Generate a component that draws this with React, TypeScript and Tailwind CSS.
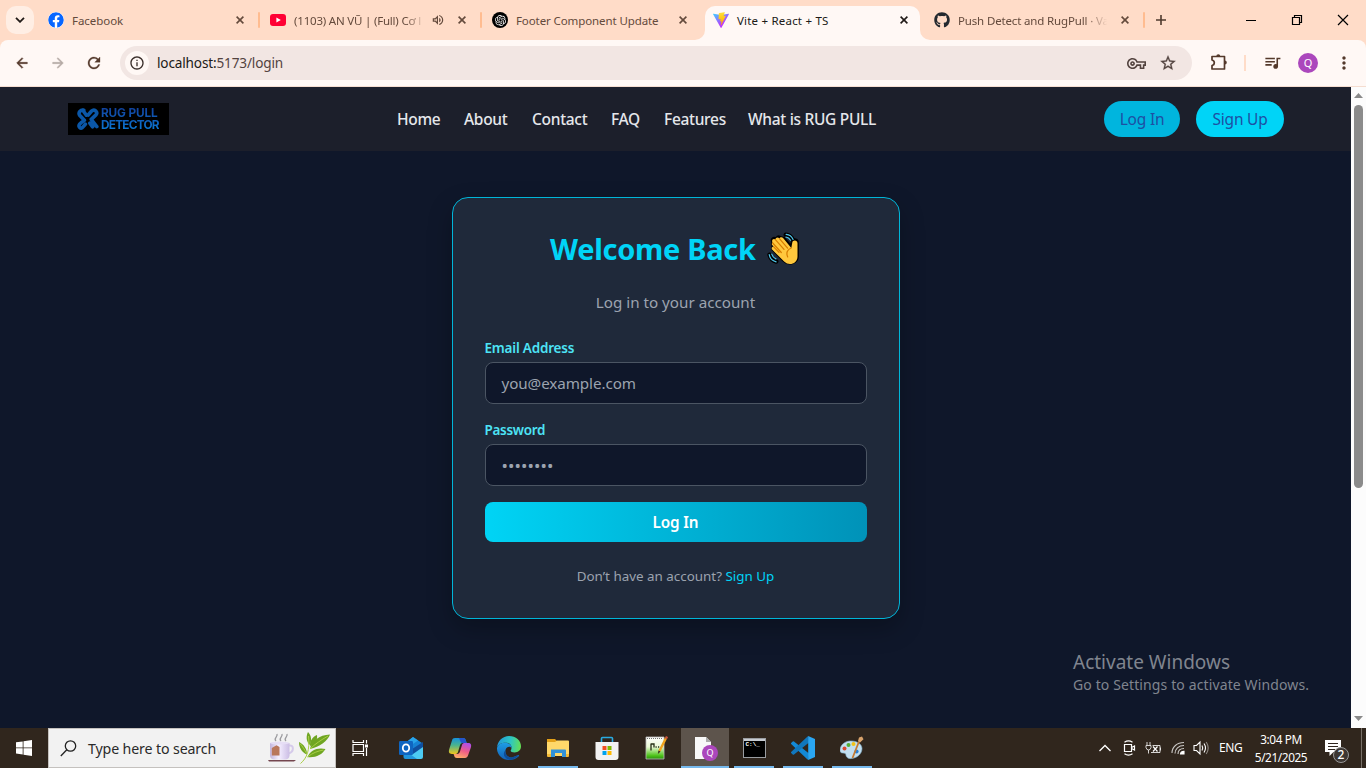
import type { ReactNode } from "react";
import { FaFacebook, FaGithub } from "react-icons/fa";
import { SiOpenai } from "react-icons/si";
import {
  MdArrowBack,
  MdArrowForward,
  MdRefresh,
  MdStarBorder,
  MdOutlineVpnKey,
  MdQueueMusic,
  MdMoreVert,
  MdOutlineVolumeUp,
  MdInfoOutline,
} from "react-icons/md";

function CloseGlyph({ className }: { className: string }) {
  return (
    <svg viewBox="0 0 8 8" className={`size-[8px] shrink-0 ${className}`} fill="none" stroke="currentColor" strokeWidth="1.6">
      <path d="M.6.6l6.8 6.8M7.4.6L.6 7.4" />
    </svg>
  );
}

function YoutubeIcon() {
  return (
    <svg viewBox="0 0 16 16" className="size-4 shrink-0">
      <rect x="0" y="2" width="16" height="12" rx="3" fill="#ff0033" />
      <path d="M6.4 5.4v5.2L10.8 8z" fill="#fff" />
    </svg>
  );
}

function ViteIcon() {
  return (
    <svg viewBox="0 0 256 257" className="size-4 shrink-0">
      <defs>
        <linearGradient id="viteA" x1="0" x2="57.6%" y1="0" y2="78.4%">
          <stop offset="0" stopColor="#41D1FF" />
          <stop offset="1" stopColor="#BD34FE" />
        </linearGradient>
        <linearGradient id="viteB" x1="43.4%" x2="50.3%" y1="2.2%" y2="89%">
          <stop offset="0" stopColor="#FFEA83" />
          <stop offset=".08" stopColor="#FFDD35" />
          <stop offset="1" stopColor="#FFA800" />
        </linearGradient>
      </defs>
      <path fill="url(#viteA)" d="M255.2 37.9 134.9 252.9c-2.5 4.5-8.9 4.5-11.4 0L.9 37.9c-2.7-4.8 1.4-10.6 6.8-9.6l120.4 21.5c.8.1 1.6.1 2.3 0l117.9-21.5c5.4-1 9.5 4.8 6.9 9.6Z" />
      <path fill="url(#viteB)" d="M185.4.1 96.4 17.5a3.3 3.3 0 0 0-2.6 3l-5.5 92.5a3.3 3.3 0 0 0 4 3.4l24.8-5.7c2.3-.5 4.4 1.5 3.9 3.9l-7.4 36.1c-.5 2.4 1.8 4.5 4.1 3.8l15.3-4.7c2.4-.7 4.6 1.4 4.1 3.8l-11.7 56.6c-.7 3.5 4 5.5 5.9 2.5l1.3-2 72.5-144.7c1.2-2.4-.9-5.2-3.5-4.7l-25.5 4.9c-2.4.5-4.4-1.8-3.8-4.1L189 4.1c.7-2.3-1.3-4.6-3.7-4Z" />
    </svg>
  );
}

function Divider() {
  return <span className="h-4 w-[2px] shrink-0 rounded-full bg-[#ffbc90]" />;
}

function Tab({ icon, title, className, tracking, fade, sound }: { icon: ReactNode; title: string; className: string; tracking: string; fade?: boolean; sound?: boolean }) {
  return (
    <div className={`flex h-[28px] shrink-0 items-center ${className}`}>
      {icon}
      <span
        className={`ml-2 min-w-0 flex-1 whitespace-nowrap pt-[2px] text-[11.5px] leading-5 ${tracking} ${
          fade ? "[mask-image:linear-gradient(to_right,black_84%,transparent_99%)]" : ""
        }`}
      >
        {title}
      </span>
      {sound && <MdOutlineVolumeUp className="ml-[4px] mr-px size-[14px] shrink-0" />}
      <CloseGlyph className="ml-3" />
    </div>
  );
}

function TabStrip() {
  return (
    <div className="flex h-10 items-center bg-[#ffdcc8] text-[#644a3c]">
      <div className="ml-[6px] mr-[4px] flex size-7 shrink-0 items-center justify-center rounded-[10px] bg-[#ffeee4] text-[#201a17]">
        <svg viewBox="0 0 10 6" className="h-[6px] w-[10px]" fill="none" stroke="currentColor" strokeWidth="1.8">
          <path d="M1 .8l4 4 4-4" />
        </svg>
      </div>
      <Tab className="w-[220px] pl-[10px] pr-[14px]" tracking="tracking-[-0.05px]" title="Facebook" icon={<FaFacebook className="size-4 shrink-0 rounded-full bg-white text-[#0866ff]" />} />
      <Divider />
      <Tab className="w-[220px] pl-[10px] pr-[14px]" tracking="tracking-[-0.2px]" title="(1103) AN VŨ | (Full) Cơ l" fade sound icon={<YoutubeIcon />} />
      <Divider />
      <Tab
        className="w-[223px] pl-[10px] pr-[18px]"
        tracking="tracking-[-0.1px]"
        title="Footer Component Update"
        icon={
          <span className="flex size-4 shrink-0 items-center justify-center rounded-full bg-black text-white">
            <SiOpenai className="size-[11px]" />
          </span>
        }
      />
      <div className="relative flex h-10 w-[215px] shrink-0 items-end">
        <svg viewBox="0 0 10 10" className="absolute -left-[10px] bottom-0 size-[10px]"><path d="M10 0v10H0A10 10 0 0 0 10 0z" fill="#fff8f5" /></svg>
        <svg viewBox="0 0 10 10" className="absolute -right-[10px] bottom-0 size-[10px]"><path d="M0 0v10h10A10 10 0 0 1 0 0z" fill="#fff8f5" /></svg>
        <div className="h-[34px] w-full rounded-t-[10px] bg-[#fff8f5] text-[#201a17]">
          <Tab className="w-full pl-2 pr-3" tracking="tracking-[0.2px]" title="Vite + React + TS" icon={<ViteIcon />} />
        </div>
      </div>
      <Tab className="w-[223px] pl-[14px] pr-[14px]" tracking="tracking-[-0.15px]" title="Push Detect and RugPull · Va" fade icon={<FaGithub className="size-4 shrink-0 text-[#24292f]" />} />
      <Divider />
      <svg viewBox="0 0 10 10" className="ml-[11px] size-[10px]" fill="none" stroke="#4f3a2e" strokeWidth="1.6"><path d="M5 0v10M0 5h10" /></svg>
      <div className="ml-auto flex items-center text-black">
        <svg viewBox="0 0 46 40" className="h-10 w-[46px]"><path d="M18 20.5h10" stroke="currentColor" /></svg>
        <svg viewBox="0 0 46 40" className="h-10 w-[46px]" fill="none" stroke="currentColor" strokeWidth="1.2">
          <path d="M18.500 17.500h7v7h-7zM20.500 17.500v-2h7v7h-2" />
        </svg>
        <svg viewBox="0 0 46 40" className="h-10 w-[46px]" fill="none" stroke="currentColor" strokeWidth="1.2"><path d="M18 15l10 10M28 15L18 25" /></svg>
      </div>
    </div>
  );
}

function PuzzleIcon() {
  return (
    <svg viewBox="0 0 18 18" className="ml-[18px] mr-[-1px] size-[18px] shrink-0 -translate-y-px" fill="none" stroke="currentColor" strokeWidth="1.700" strokeLinejoin="round">
      <path d="M2 3.500h12.500v12.500H2v-3.500c1.700-.3 2.300-1.300 2.300-2.700S3.700 7.300 2 7z" />
      <path d="M6.300 3.200a2 2 0 0 1 4 0zM14.800 7.500a2 2 0 0 1 0 4z" fill="currentColor" stroke="none" />
    </svg>
  );
}

function Toolbar() {
  return (
    <div className="bg-[#ffdcc8]">
      <div className="flex h-[47px] items-center rounded-t-[8px] border-b border-[#f5ddd0] bg-[#fff8f5] text-[#54392b]">
        <MdArrowBack className="ml-[14px] size-4 shrink-0 [&>path+path]:[stroke-width:0.7]" />
        <MdArrowForward className="ml-[20px] size-4 shrink-0 text-[#b5aaa5] [&>path+path]:[stroke-width:0.7]" />
        <MdRefresh className="ml-[19px] size-[18px] shrink-0 [&>path+path]:[stroke-width:0.4]" />
        <div className="ml-[17px] flex h-[34px] w-[1072px] shrink-0 items-center rounded-full bg-[#f2e6e3] pl-[5px] text-[#53433f]">
          <span className="flex size-6 items-center justify-center rounded-full bg-[#fff8f5] text-[#3a2e2a]">
            <MdInfoOutline className="size-4" />
          </span>
          <span className="ml-2 whitespace-nowrap text-[13.6px] tracking-[-0.16px]">
            <span className="text-[#201a17]">localhost:</span>5173/login
          </span>
          <MdOutlineVpnKey className="ml-auto size-[19px]" />
          <MdStarBorder className="ml-[13px] mr-[15px] size-[18px] [&>path+path]:[stroke-width:0.4]" />
        </div>
        <PuzzleIcon />
        <span className="ml-[17px] h-4 w-[2px] bg-[#ffdcc8]" />
        <MdQueueMusic className="ml-[17px] size-[19px] shrink-0 -translate-y-px" />
        <span className="ml-[16px] flex size-5 shrink-0 items-center justify-center rounded-full bg-[#ab47bc] text-[11px] text-white">Q</span>
        <MdMoreVert className="ml-[16px] size-5 shrink-0" />
      </div>
    </div>
  );
}

function BrandLogo() {
  return (
    <div className="ml-[68px] flex h-8 w-[101px] shrink-0 items-center bg-black pl-[9px]">
      <svg viewBox="0 0 22 22" className="size-[22px] shrink-0" fill="none" stroke="#0b57a8" strokeWidth="3.600" strokeLinecap="round" strokeLinejoin="round">
        <path d="M6.800 2.200C3.500 1.500 1 4.600 2.600 7.200L7.400 12.200C3 15.200.8 17.400 2.600 19.400 4.800 21.400 6.400 18.600 8.400 16.200" />
        <path d="M6 2.500L9.400 7.200M11.200 7L14.600 3C17.400.4 21 4 19.200 6.600L14.200 11.400 19.800 18.600M12.800 15.200l2.800 3.600" />
      </svg>
      <span className="ml-[2px] bg-gradient-to-b from-[#113f9b] to-[#0a7bd8] bg-clip-text font-['Inter',sans-serif] text-[11.800px] font-bold leading-[12px] text-transparent">
        <span className="block whitespace-nowrap tracking-[-0.15px]">RUG PULL</span>
        <span className="block whitespace-nowrap tracking-[-0.75px]">DETECTOR</span>
      </span>
    </div>
  );
}

function SiteHeader() {
  return (
    <header className="flex h-16 shrink-0 items-center bg-[#1c1f2b]">
      <BrandLogo />
      <nav className="ml-[228px] flex items-center gap-6 whitespace-nowrap pt-px text-[15.500px] font-medium tracking-[-0.3px] text-[#e5e7eb]">
        <a className="w-[43px]">Home</a>
        <a className="w-[44px]">About</a>
        <a className="w-[55px]">Contact</a>
        <a className="w-[29px]">FAQ</a>
        <a className="w-[60px]">Features</a>
        <a className="w-[129px]">What is RUG PULL</a>
      </nav>
      <div className="ml-auto mr-[67px] flex gap-4 text-[15.500px] tracking-[-0.2px] text-[#1e4fa3]">
        <button className="flex h-9 w-[76px] items-center justify-center rounded-full bg-[#00b5de] pt-px">Log In</button>
        <button className="flex h-9 w-[88px] items-center justify-center rounded-full bg-[#00d4f7] pt-px">Sign Up</button>
      </div>
    </header>
  );
}

function WavingHand() {
  return (
    <svg viewBox="0 0 34 36" className="mt-[2px] h-[36px] w-[34px] shrink-0" strokeLinecap="round" strokeLinejoin="round">
      <g fill="#000" stroke="#000" strokeWidth="3.600">
        <path d="M6 9.500c-1.600-1.800.8-3.800 2.500-2.300l1.500-.8c1.100-1.900 3.400-1.400 4.200.2 1.800-.8 2.900.2 3.600 1.200l6.400 7.600 1.600-6.200c1.400-1.900 4.300-1.200 4.300 1.300v13.800c0 5.600-7.800 9-13.200 3.800L6.400 17.600z" />
        <path d="M18.800 2.800c3 .2 5.600 2.200 7 5.200M2.600 22.800c.8 3.400 3.400 5.800 6.600 6.600" fill="none" strokeWidth="4.600" />
      </g>
      <path fill="#ffc83d" d="M5.600 10.400c-1.600-2.200.9-4.400 2.800-2.800.1-2.200 2.600-2.900 4-1.200.7-1.600 2.900-1.500 3.900-.2l8 9.900.9-5.200c.2-3.400 5.300-3.200 5.300.3v13.200c0 6.800-8 10.400-13.400 5.200L5.300 17.700c-1.600-1.800.4-3.600 1.600-2.600l-1.500-1.800c-1-1.200-.5-2.400.2-2.900z" />
      <path fill="none" stroke="#d67d00" strokeWidth="1.200" d="M8.400 7.600l8.600 9.800M12.400 6.600l8.200 9.600M5.700 11l8.600 9.500M6.900 15.100l5.100 5.200M24.200 16c-4 1.600-5.300 5-3.500 8.900" />
      <g fill="none" stroke="#50c8ee" strokeWidth="1.200">
        <path d="M19.200 2.400c3 .2 5.600 2.100 6.900 5M18.900 5c2.100.2 3.600 1.400 4.700 3.300M2.200 22.700c.7 3.500 3.300 6.300 6.900 7.200M4.800 22.200c.6 2.300 2.100 3.800 4.100 4.700" />
      </g>
    </svg>
  );
}

function LoginCard() {
  return (
    <section className="mt-[46px] flex h-[422px] w-[448px] flex-col self-center rounded-[16px] border border-[#00b5d8] bg-[#1f293a] px-8 shadow-[0_10px_25px_rgba(0,0,0,0.25)]">
      <h1 className="mt-[33px] flex h-9 items-center justify-center whitespace-nowrap text-[29px] font-bold tracking-[-0.3px] text-[#00d4f7]">
        <span className="w-[207px]">Welcome Back</span>
        <span className="ml-[10px]"><WavingHand /></span>
      </h1>
      <p className="mt-[23px] text-center text-[15.200px] leading-6 text-[#9ca3af]">Log in to your account</p>
      <label className="mt-[24px] text-[13.500px] font-semibold leading-5 tracking-[-0.2px] text-[#4de3f5]">Email Address</label>
      <div className="mt-[4px] flex h-[42px] shrink-0 items-center rounded-lg border border-[#4b5563] bg-[#0f172a] px-4 pt-px text-[15.200px] tracking-[-0.08px] text-[#9ca3af]">you@example.com</div>
      <label className="mt-[16px] text-[13.500px] font-semibold leading-5 tracking-[-0.3px] text-[#4de3f5]">Password</label>
      <div className="mt-[4px] flex h-[42px] shrink-0 items-center rounded-lg border border-[#4b5563] bg-[#0f172a] px-4 pt-[2px] text-[17px] tracking-[0.1px] text-[#9ca3af]">••••••••</div>
      <button className="mt-4 flex h-10 shrink-0 items-center justify-center rounded-lg bg-[linear-gradient(to_right,#00d4f5,#0092b8)] pt-px text-[15.300px] font-semibold tracking-[-0.15px] text-white">Log In</button>
      <p className="mt-6 text-center text-[13.400px] leading-5 text-[#9ca3af]">
        Don’t have an account? <a className="text-[#00d4f7]">Sign Up</a>
      </p>
    </section>
  );
}

function Scrollbar() {
  return (
    <div className="flex w-[15px] shrink-0 flex-col items-center bg-[#fcfcfc]">
      <svg viewBox="0 0 9 5" className="mt-[6px] h-[5px] w-[9px] shrink-0"><path d="M4.500 0L9 5H0z" fill="#8a8a8a" /></svg>
      <span className="mt-[7px] h-[383px] w-[9px] rounded-full bg-[#8b8b8b]" />
      <svg viewBox="0 0 9 5" className="mb-[7px] mt-auto h-[5px] w-[9px]"><path d="M0 0h9L4.500 5z" fill="#8a8a8a" /></svg>
    </div>
  );
}

function OutlookIcon() {
  return (
    <svg viewBox="0 0 24 24" className="size-6">
      <path d="M5 8l9-7 9 6v12H5z" fill="#1682d4" />
      <path d="M5 8l9-7 5 3.400L8 12z" fill="#28a4ea" />
      <path d="M24 8v13a2 2 0 0 1-2 2H7L24 8z" fill="#4ccbf3" />
      <path d="M4.500 13.500L18 23H6.500a2 2 0 0 1-2-2z" fill="#2196dc" />
      <path d="M10 15l14-9v5l-10 7z" fill="#0f4f9f" />
      <rect x="0" y="5" width="14" height="14" rx="1.200" fill="#0f65c0" />
      <ellipse cx="7" cy="12" rx="3.200" ry="3.600" fill="none" stroke="#fff" strokeWidth="1.800" />
    </svg>
  );
}

function CopilotIcon() {
  return (
    <svg viewBox="0 0 24 24" className="size-6">
      <defs>
        <linearGradient id="copA" x1="0" y1="0" x2="0" y2="1"><stop offset="0" stopColor="#1591dc" /><stop offset=".45" stopColor="#4ab48e" /><stop offset="1" stopColor="#f0c61c" /></linearGradient>
        <linearGradient id="copB" x1="0.7" y1="0" x2="0.3" y2="1"><stop offset="0" stopColor="#b04ee8" /><stop offset=".5" stopColor="#ef5c87" /><stop offset="1" stopColor="#ffae67" /></linearGradient>
      </defs>
      <path d="M7 2h8c2 0 2.500 1 3 3l.7 2h-4c-1.800 0-2.300 1-2.800 2.600L10 16c-.6 1.500-1.400 2-3 2H4c-3 0-3.600-2-2.800-4.700L4 4.400C4.500 2.800 5.300 2 7 2z" fill="url(#copA)" />
      <path d="M11 2h4c2 0 2.500 1 3 3l.7 2h-4c-1.400 0-2-.6-2.400-2z" fill="#2455cc" />
      <path d="M17 22H9c-2 0-2.600-1-3-3l-.5-1H9c1.800 0 2.500-.8 3-2.400L14 9c.5-1.500 1.300-2 3-2h3c3 0 3.700 2 2.800 4.700L20 19.600c-.5 1.600-1.400 2.400-3 2.400z" fill="url(#copB)" />
    </svg>
  );
}

function EdgeIcon() {
  return (
    <svg viewBox="0 0 24 24" className="size-6">
      <defs>
        <linearGradient id="edgeA" x1="0" y1=".4" x2="1" y2=".5"><stop offset="0" stopColor="#2196d8" /><stop offset=".55" stopColor="#2dc6c4" /><stop offset="1" stopColor="#64df55" /></linearGradient>
        <linearGradient id="edgeB" x1="0" y1="0" x2="0" y2="1"><stop offset="0" stopColor="#1e9de4" /><stop offset="1" stopColor="#1360b5" /></linearGradient>
      </defs>
      <path d="M0 11.500C.6 5 5.600 0 12 0c7 0 12 4.800 12 10.300 0 4-3 6.200-6.300 6.200-3 0-4.400-1.200-4-2 1.800-2.500 1-7.700-5-7.700C4.400 6.800 1 8.700 0 11.500z" fill="url(#edgeA)" />
      <path d="M0 12C.8 8.600 4.500 6.800 8 6.800c4 0 7 2.400 6.600 5.700C14 10 9.500 10 8.500 14c-1 4.500 3 9 8.500 6.800 2-.8 3.800-2 4.800-1.800.5.300.3.800-.3 1.500C19.200 23 15.500 24 12 24 5.400 24-.3 18.700 0 12z" fill="url(#edgeB)" />
      <path d="M8.500 14c-1 4.500 3 9 8.500 6.800 2-.8 3.800-2 4.800-1.800-2.200 3.400-5.800 4.700-9.300 4.700-5-1-7.500-5.500-4-9.700z" fill="#0e4c97" />
    </svg>
  );
}

function FolderIcon() {
  return (
    <svg viewBox="0 0 24 24" className="size-6">
      <path d="M1 3h8l2 2v3H1z" fill="#e3a018" />
      <path d="M1 6h8l2-1.500h11a1 1 0 0 1 1 1V20H2a1 1 0 0 1-1-1z" fill="#ffd86a" />
      <path d="M5 13.500h14a1 1 0 0 1 1 1V21h-4v-4H9v4H5z" fill="#3292d8" />
      <path d="M1 18h4v3H2a1 1 0 0 1-1-1zM20 18h3v2a1 1 0 0 1-1 1h-2z" fill="#f4b934" />
    </svg>
  );
}

function StoreIcon() {
  return (
    <svg viewBox="0 0 24 24" className="size-6">
      <path d="M6.500 7V2.500a1 1 0 0 1 1-1h9a1 1 0 0 1 1 1V7" fill="none" stroke="#29abe2" strokeWidth="1.600" />
      <path d="M.5 6h23v15a3 3 0 0 1-3 3h-17a3 3 0 0 1-3-3z" fill="#f2f2f2" />
      <path d="M7.500 10h4v4h-4z" fill="#f25022" /><path d="M12.500 10h4v4h-4z" fill="#7fba00" />
      <path d="M7.500 15h4v4h-4z" fill="#00a4ef" /><path d="M12.500 15h4v4h-4z" fill="#ffb900" />
    </svg>
  );
}

function NotepadIcon() {
  return (
    <svg viewBox="0 0 24 24" className="size-6">
      <defs><linearGradient id="npp" x1="0" y1="0" x2="0" y2="1"><stop offset="0" stopColor="#fff" /><stop offset=".45" stopColor="#eaf9d6" /><stop offset=".85" stopColor="#4cc318" /><stop offset="1" stopColor="#2c8d10" /></linearGradient></defs>
      <path d="M2 1h18v22H2z" fill="url(#npp)" stroke="#bbb" strokeWidth=".8" />
      <path d="M3 2.500h16" stroke="#777" strokeWidth="1.200" strokeDasharray="1 1" />
      <path d="M7 7.500v7M7 8h3v3.500M11.500 11h1.200M14 11h1.200" stroke="#263016" strokeWidth="1.300" fill="none" />
      <path d="M22 2L15.500 15" stroke="#f0a31c" strokeWidth="2.400" /><path d="M23 .5l-1.100 2.200" stroke="#c8543c" strokeWidth="2.400" />
      <path d="M14.400 14.500l-.5 3.500 2.600-2.500z" fill="#3b2c1a" />
    </svg>
  );
}

function ProfilePageIcon() {
  return (
    <span className="relative flex size-6">
      <svg viewBox="0 0 24 24" className="size-6"><path d="M2 1h11l5 5v17H2z" fill="#f8f8f8" /><path d="M13 1v5h5z" fill="#aaa" /></svg>
      <span className="absolute -right-[1px] top-[9px] flex size-4 items-center justify-center rounded-full bg-[#ab47bc] text-[9px] text-white">Q</span>
    </span>
  );
}

function TerminalIcon() {
  return (
    <span className="relative flex h-5 w-[23px] flex-col border border-[#9a9da1] bg-black">
      <span className="h-[2px] w-full bg-[#c7cbd1]" />
      <span className="pl-[2px] font-['Liberation_Mono',monospace] text-[6px] font-bold leading-[8px] text-white">C:\_</span>
    </span>
  );
}

function CodeIcon() {
  return (
    <svg viewBox="0 0 24 24" className="size-6">
      <path d="M17.200 24L18 17.500 3 5.500a1 1 0 0 0-1.300 0L.4 6.700a1 1 0 0 0 0 1.500L16 23z" fill="#1389d6" />
      <path d="M17.200 0L18 6.500 3 18.500a1 1 0 0 1-1.300 0L.4 17.300a1 1 0 0 1 0-1.500L16 1z" fill="#1177bd" />
      <path d="M17.200 0L24 3v18l-6.800 3z" fill="#2aa6f2" />
    </svg>
  );
}

function PaintIcon() {
  return (
    <svg viewBox="0 0 24 24" className="size-6">
      <path d="M10 5C4 5.500 0 9.500 0 14.500c0 2 1.500 2.500 3 2.500 2 0 3 .8 3 2.500C6.500 22 9 23 12 22.500c6-1 10-5 10-10C22 8 16.500 4.500 10 5z" fill="#c2dff1" stroke="#7faeca" strokeWidth=".6" />
      <circle cx="4.500" cy="12.500" r="2" fill="#d84a31" /><circle cx="8.500" cy="9" r="2" fill="#52ad36" /><circle cx="13.500" cy="8" r="2" fill="#f2c218" /><circle cx="16.500" cy="15.500" r="2.100" fill="#2a80d3" />
      <path d="M12.500 22L19 5.500" stroke="#c57a32" strokeWidth="1.800" /><path d="M18 5l1-3.500 3-1 1.500 2.800L20 6.500z" fill="#d9a36c" />
    </svg>
  );
}

function TaskItem({ children, active, open }: { children: ReactNode; active?: boolean; open?: boolean }) {
  return (
    <div className={`flex h-10 w-12 shrink-0 flex-col items-center ${active ? "bg-[#5d544c]" : ""}`}>
      <span className="flex h-[38px] items-center justify-center pt-[2px]">{children}</span>
      <span className={`h-[2px] ${active ? "w-full" : "w-10"} ${open || active ? "bg-[#76b9ed]" : ""}`} />
    </div>
  );
}

function SearchArt() {
  return (
    <svg viewBox="0 0 66 36" className="ml-auto mr-1 h-9 w-[66px]">
      <defs>
        <linearGradient id="cup" x1="0" x2="1"><stop offset="0" stopColor="#c2b4dc" /><stop offset=".45" stopColor="#f4eeff" /><stop offset="1" stopColor="#cbbde4" /></linearGradient>
      </defs>
      <path d="M11 11c-3-2.500 2-4 1-7M16 11c-3-2.500 2-4 1-7M21 11c-3-2.500 2-4 1-7" fill="none" stroke="#9a9a9e" strokeWidth="1.300" />
      <path d="M24 15.500c5-1 5.500 6-.5 8" fill="none" stroke="#d5caea" strokeWidth="2" />
      <path d="M5 13h19.500v12.500c0 2.500-2 4-4.500 4H9.500C7 29.500 5 28 5 25.500z" fill="url(#cup)" />
      <ellipse cx="14.700" cy="13" rx="9.700" ry="1.500" fill="#e6def5" />
      <path d="M8.500 17l3-1.800L14.500 17v8.500H6.800V18z" fill="#b9775c" />
      <path d="M3 30h28l-2 1.600H4z" fill="#74464f" />
      <g fill="#6fa522">
        <path d="M44.500 15C41 11 41 6 43 2c3.500 3.500 4 9 1.500 13z" />
        <path d="M42 24.500c-5-2-8-6.500-8-12.500 5 2.500 8 7 8 12.500z" />
        <path d="M45 19c1.500-8 9-14 20-14.500-2.500 6.500-10.500 12.500-20 14.500z" />
        <path d="M42.500 27c2.500-6.500 10-10 18-8-3.500 6-10.500 9-18 8z" />
        <path d="M45 16c-.5-5 2.500-9 7-11 .8 5-2 9.500-7 11z" />
      </g>
      <path d="M35.500 33.500C42 28 45 20 43.500 6M42.500 27c5-4 10-6 16-7M45 19c5-5 11-9 18-13M41.500 23.500c-2-4-4-7-6.500-10" fill="none" stroke="#a9cf45" strokeWidth="1" />
    </svg>
  );
}

function SystemTray() {
  return (
    <div className="ml-auto flex h-10 shrink-0 items-center text-white">
      <svg viewBox="0 0 12 8" className="h-[8px] w-[12px]" fill="none" stroke="currentColor" strokeWidth="1.300"><path d="M.5 7L6 1.500 11.500 7" /></svg>
      <svg viewBox="0 0 14 16" className="ml-[12px] h-4 w-[14px]" fill="none" stroke="currentColor" strokeWidth="1.200"><path d="M1.500 4.500h7v7h-7zM8.500 7.500l3-1.500v4l-3-1.500M1.500 2.200Q5.500-.5 9.500 2.200M1.500 13.800Q5.500 16.500 9.500 13.800" /></svg>
      <svg viewBox="0 0 17 14" className="ml-[8px] h-[14px] w-[17px]" fill="none" stroke="currentColor"><path d="M2 1v3M5 1v3M1 4.500h5v2Q5.500 9 3.500 9 1.500 9 1 6.500zM3.500 9v3.500M7.500 4.500H15v7H6M15.500 6.500v3" strokeOpacity=".8" /><path d="M8 5.500l4.500 5M12.500 5.500l-4.500 5" strokeWidth="1.200" /></svg>
      <svg viewBox="0 0 14 14" className="ml-[9px] h-[14px] w-[14px]" fill="none" stroke="currentColor" strokeWidth="1.100"><path d="M1 12C1 6 6 1.500 13 1.500M4 12.500C4 8 7.500 4.500 13 4.500M7 13c0-3.500 2.500-5.500 6-5.500" strokeOpacity=".75" /><path d="M9.500 13c.2-1.700 1.500-2.700 3.500-2.700V13z" fill="currentColor" /></svg>
      <svg viewBox="0 0 17 16" className="ml-[8px] h-4 w-[17px]" fill="none" stroke="currentColor" strokeWidth="1.100"><path d="M1 5.500h2.500L7 2v12l-3.500-3.500H1zM9 5.500q1.500 2.500 0 5M11 3.500q3 4.500 0 9" /><path d="M13.200 2q4 6 0 12" strokeOpacity=".45" /></svg>
      <span className="ml-[9px] w-[24px] whitespace-nowrap text-[12px] tracking-[-0.35px]">ENG</span>
      <div className="ml-[11px] flex w-[54px] flex-col items-center whitespace-nowrap text-[11.800px] leading-[18px] tracking-[-0.4px]"><span>3:04 PM</span><span>5/21/2025</span></div>
      <div className="relative ml-[17px] h-6 w-[26px]">
        <svg viewBox="0 0 26 24" className="h-6 w-[26px]"><path d="M0 4h16v12H8.500l-4 4v-4H0z" fill="#fff" /><path d="M3 7.500h10M3 10.500h10M3 13.500h7" stroke="#302620" /></svg>
        <span className="absolute left-[8px] top-[11px] flex size-[16px] items-center justify-center rounded-full border border-[#999] bg-[#3d3733] text-[12px] font-medium leading-none">2</span>
      </div>
      <span className="ml-[10px] mr-1 h-10 w-px bg-[#776f67]" />
    </div>
  );
}

function Taskbar() {
  return (
    <footer className="flex h-10 shrink-0 items-center bg-[#30261d]">
      <div className="flex w-12 shrink-0 items-center justify-center">
        <svg viewBox="0 0 16 16" className="size-4" fill="#fff"><path d="M0 2.300l6.700-.9v6.100H0zM7.500 1.300L16 0v7.500H7.500zM0 8.300h6.700v6.100L0 13.500zM7.500 8.300H16V16l-8.500-1.200z" /></svg>
      </div>
      <div className="flex h-10 w-[288px] shrink-0 items-center border border-[#c4c1be] bg-[#f2f2f2] pl-[11px] text-[#2a2a2a]">
        <svg viewBox="0 0 17 17" className="size-[17px] shrink-0" fill="none" stroke="#222" strokeWidth="1.300"><circle cx="10.500" cy="6" r="5.200" /><path d="M6.800 9.700L.8 16" /></svg>
        <span className="ml-[11px] whitespace-nowrap pt-px text-[14.200px] tracking-[-0.13px]">Type here to search</span>
        <SearchArt />
      </div>
      <div className="mr-[3px] flex w-12 shrink-0 items-center justify-center">
        <svg viewBox="0 0 17 16" className="h-4 w-[17px]" fill="none" stroke="#fff" strokeWidth="1.200"><path d="M1 0v2.500h10.500V0M1 4.500h10.500v7H1zM1 16v-2.500h10.500V16M14.500 0v3.500M14.500 8v8" /><path d="M13 4.500h3v3h-3z" fill="#fff" stroke="none" /></svg>
      </div>
      <div className="flex gap-px">
        <TaskItem><OutlookIcon /></TaskItem>
        <TaskItem><CopilotIcon /></TaskItem>
        <TaskItem><EdgeIcon /></TaskItem>
        <TaskItem open><FolderIcon /></TaskItem>
        <TaskItem><StoreIcon /></TaskItem>
        <TaskItem><NotepadIcon /></TaskItem>
        <TaskItem active><ProfilePageIcon /></TaskItem>
        <TaskItem open><TerminalIcon /></TaskItem>
        <TaskItem open><CodeIcon /></TaskItem>
        <TaskItem open><PaintIcon /></TaskItem>
      </div>
      <SystemTray />
    </footer>
  );
}

export default function App() {
  return (
    <div className="relative flex h-[768px] w-[1366px] flex-col overflow-hidden font-['Noto_Sans','Open_Sans',sans-serif]">
      <TabStrip />
      <Toolbar />
      <div className="flex min-h-0 flex-1">
        <main className="flex min-w-0 flex-1 flex-col bg-[#0f172a]">
          <SiteHeader />
          <LoginCard />
        </main>
        <Scrollbar />
      </div>
      <Taskbar />
      <div className="absolute left-[1073px] top-[650px] whitespace-nowrap text-[#80858f]">
        <p className="text-[19px] leading-6">Activate Windows</p>
        <p className="text-[14px] leading-[22px] tracking-[0.12px]">Go to Settings to activate Windows.</p>
      </div>
    </div>
  );
}
